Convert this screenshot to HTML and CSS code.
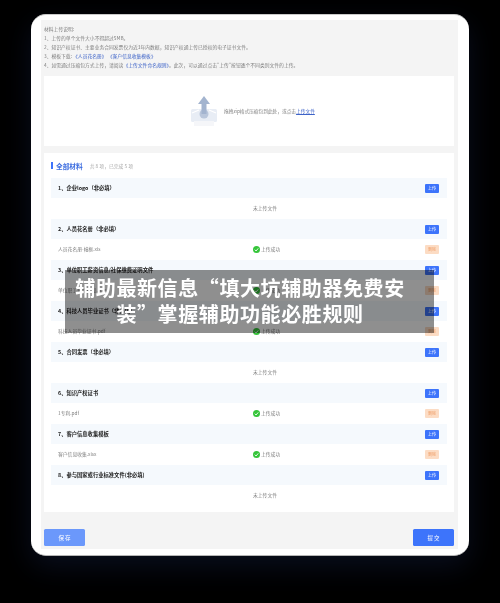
FILE: index.html
```html
<!DOCTYPE html>
<html lang="zh-CN">
<head>
<meta charset="utf-8">
<title>辅助最新信息</title>
<link rel="stylesheet" href="styles.css">
</head>
<body>
<div class="tablet">
  <div class="screen">
    <div class="notes">
      <p>材料上传说明:</p>
      <p>1、上传的单个文件大小不得超过5MB。</p>
      <p>2、知识产权证书、主要业务合同发票仅为近3年内数据，知识产权通上传已授权的电子证书文件。</p>
      <p>3、模板下载: <a>《人员花名册》</a> <a>《客户信息收集模板》</a></p>
      <p>4、如需通过压缩包方式上传，请阅读<a>《上传文件命名规则》</a>。此次，可以通过点击"上传"按钮逐个不同类别文件的上传。</p>
    </div>
    <section class="card drop">
      <svg class="drop-icon" viewBox="0 0 28 32" width="28" height="32">
        <rect x="1" y="14" width="26" height="13" rx="1.5" fill="#e8edf5"/>
        <rect x="4" y="26" width="20" height="5" fill="#f5f6f9"/>
        <path d="M2 18l7-3M26 18l-7-3" stroke="#fff" stroke-width="1.2"/>
        <circle cx="14" cy="19" r="4.5" fill="#b9c6db"/>
        <path d="M14 1l6 8h-3.500v10h-5V9H8z" fill="#a3b4cf"/>
      </svg>
      <span>拖拽zip格式压缩包到此处，或点击<a class="link-line">上传文件</a></span>
    </section>
    <section class="card list">
      <header class="list-head"><h2>全部材料</h2><span>共 8 项，已完成 5 项</span></header>

      <div class="row-head"><b>1、企业logo（非必填）</b><button class="btn-up">上传</button></div>
      <div class="row-body"><span></span><span class="status">未上传文件</span></div>

      <div class="row-head"><b>2、人员花名册（非必填）</b><button class="btn-up">上传</button></div>
      <div class="row-body"><span>人员花名册-幢框.xls</span><span class="status"><i class="ok"><svg viewBox="0 0 8 8"><path d="M2 4.200l1.500 1.500L6 2.700"/></svg></i>上传成功</span><button class="btn-del">删除</button></div>

      <div class="row-head"><b>3、单位职工薪资信息/社保缴费证明文件</b><button class="btn-up">上传</button></div>
      <div class="row-body"><span>单位职工薪资信息.xlsx</span><span class="status"><i class="ok"><svg viewBox="0 0 8 8"><path d="M2 4.200l1.500 1.500L6 2.700"/></svg></i>上传成功</span><button class="btn-del">删除</button></div>

      <div class="row-head"><b>4、科技人员毕业证书（非必填）</b><button class="btn-up">上传</button></div>
      <div class="row-body"><span>科技人员毕业证书.pdf</span><span class="status"><i class="ok"><svg viewBox="0 0 8 8"><path d="M2 4.200l1.500 1.500L6 2.700"/></svg></i>上传成功</span><button class="btn-del">删除</button></div>

      <div class="row-head"><b>5、合同发票（非必填）</b><button class="btn-up">上传</button></div>
      <div class="row-body"><span></span><span class="status">未上传文件</span></div>

      <div class="row-head"><b>6、知识产权证书</b><button class="btn-up">上传</button></div>
      <div class="row-body"><span>1专利.pdf</span><span class="status"><i class="ok"><svg viewBox="0 0 8 8"><path d="M2 4.200l1.500 1.500L6 2.700"/></svg></i>上传成功</span><button class="btn-del">删除</button></div>

      <div class="row-head"><b>7、客户信息收集模板</b><button class="btn-up">上传</button></div>
      <div class="row-body"><span>客户信息收集.xlsx</span><span class="status"><i class="ok"><svg viewBox="0 0 8 8"><path d="M2 4.200l1.500 1.500L6 2.700"/></svg></i>上传成功</span><button class="btn-del">删除</button></div>

      <div class="row-head"><b>8、参与国家或行业标准文件(非必填)</b><button class="btn-up">上传</button></div>
      <div class="row-body"><span></span><span class="status">未上传文件</span></div>
    </section>
    <footer class="actions">
      <button class="btn-save">保 存</button>
      <button class="btn-submit">提 交</button>
    </footer>
  </div>
</div>
<h1 class="banner">辅助最新信息“填大坑辅助器免费安装”掌握辅助功能必胜规则</h1>
</body>
</html>
```
FILE: styles.css
```css
* { box-sizing: border-box; }
html, body { margin: 0; height: 603px; overflow: hidden; background: #000; }
body {
  position: relative;
  font-family: "Noto Sans CJK SC", "Noto Sans", sans-serif;
  padding: 14px 31px 0;
}
p, h1, h2 { margin: 0; }
.tablet {
  width: 438px;
  height: 542px;
  padding: 6px 11px 7px 10px;
  background: #fff;
  border-radius: 15px;
  border-top: 1px solid #c9c9c9;
  border-bottom: 1px solid #b5b5b5;
  box-shadow: 0 10px 28px rgba(24, 38, 84, .36);
}
.screen {
  height: 529px;
  margin-top: -1px;
  padding: 4px 4px 0 3px;
  background: #f4f4f4;
  filter: blur(.6px);
}
.notes {
  height: 52px;
  font-size: 4.8px;
  line-height: 9px;
  color: #808080;
  white-space: nowrap;
}
.notes a, .link-line { color: #3d63c8; }
.card { background: #fff; }
.drop {
  height: 70px;
  display: flex;
  align-items: center;
  padding-left: 146px;
  gap: 6px;
  font-size: 4.7px;
  color: #808080;
}
.drop-icon { flex: none; }
.link-line { text-decoration: underline; }
.list { height: 359px; margin-top: 7px; padding: 0 7px; }
.list-head {
  height: 25px;
  display: flex;
  align-items: center;
  gap: 7px;
  padding-left: 5px;
  position: relative;
  font-size: 4.8px;
  color: #aaa;
}
.list-head::before {
  content: "";
  position: absolute;
  left: 0;
  top: 9px;
  width: 1.500px;
  height: 7px;
  background: #3d74fb;
}
.list-head h2 { font-size: 6.7px; font-weight: 700; color: #3f6fe0; }
.row-head {
  height: 20px;
  padding: 0 8px 1px 7px;
  display: flex;
  align-items: center;
  justify-content: space-between;
  background: #f5f9fd;
  font-size: 5.300px;
  color: #222;
}
.row-head b { font-weight: 700; }
.row-head button { margin-bottom: -1px; }
.row-body {
  height: 21px;
  padding: 0 8px 2px 7px;
  display: grid;
  grid-template-columns: 195px 1fr 14px;
  align-items: center;
  font-size: 4.8px;
  color: #808080;
}
.row-body button { margin-bottom: -1px; }
.status { display: flex; align-items: center; gap: 1px; white-space: nowrap; }
.ok {
  width: 7px;
  height: 7px;
  margin-top: 1px;
  border-radius: 50%;
  background: #35c53a;
  display: block;
}
.ok svg { display: block; width: 7px; height: 7px; fill: none; stroke: #fff; stroke-width: 1; }
button {
  border: 0;
  padding: 0;
  font-family: inherit;
  cursor: pointer;
}
.btn-up, .btn-del {
  width: 14px;
  height: 9px;
  border-radius: 1px;
  font-size: 4px;
  line-height: 9px;
}
.btn-up { background: #3d74fb; color: #fff; }
.btn-del { background: #fcdcc4; color: #ef9f6a; }
.actions {
  margin-top: 17px;
  display: flex;
  justify-content: space-between;
}
.btn-save, .btn-submit {
  width: 41px;
  height: 17px;
  border-radius: 1.500px;
  color: #fff;
  font-size: 5.500px;
}
.btn-save { background: #6b98fb; }
.btn-submit { background: #3d74fb; }
.banner {
  position: absolute;
  left: 65px;
  top: 270px;
  width: 369px;
  height: 63px;
  padding: 5px 28px 0 9px;
  background: rgba(0, 0, 0, .44);
  color: #fff;
  font-size: 20px;
  font-weight: 700;
  line-height: 26px;
  letter-spacing: .6px;
  text-align: center;
  filter: blur(.55px);
}
```
